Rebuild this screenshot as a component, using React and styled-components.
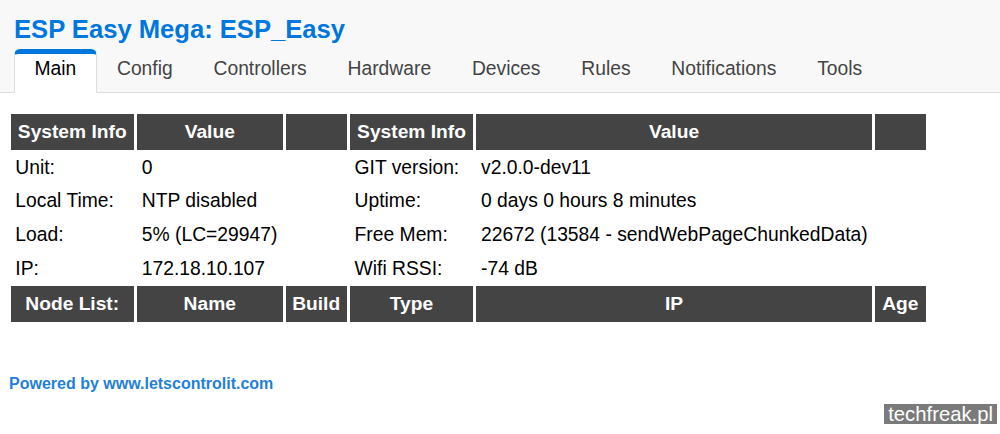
import React from "react";
import styled, { createGlobalStyle } from "styled-components";

const Global = createGlobalStyle`
  * { box-sizing: border-box; }
  html, body { margin: 0; padding: 0; background: #fff; }
  body { font-family: "Liberation Sans", Arial, sans-serif; font-size: 19.2px; color: #000; }
`;

const Page = styled.div`
  position: relative;
  width: 1000px;
  height: 434px;
  overflow: hidden;
`;

const Header = styled.header`
  background: #f8f8f8;
  border-bottom: 1px solid #ddd;
  padding: 15px 14px 0;
`;

const Title = styled.h1`
  margin: 0;
  font-size: 25.6px;
  line-height: 29px;
  font-weight: bold;
  color: #07d;
`;

const TabRow = styled.nav`
  display: flex;
  margin-top: 5px;
  margin-bottom: -1px;
`;

const Tab = styled.a`
  display: block;
  padding: 4px 19.4px 12px;
  line-height: 22px;
  font-size: 19.3px;
  white-space: nowrap;
  text-decoration: none;
  border: solid transparent;
  border-width: 5px 1.2px 1px;
  border-radius: 6px 6px 0 0;
  color: ${(p) => (p.$active ? "#000" : "#444")};
  background: ${(p) => (p.$active ? "#fff" : "transparent")};
  border-color: ${(p) => (p.$active ? "#07d #ddd #fff" : "transparent")};
`;

const Table = styled.table`
  table-layout: fixed;
  width: 921.5px;
  margin: 18.6px 0 0 7.5px;
  border-collapse: separate;
  border-spacing: 3.5px 2.4px;
`;

const Th = styled.th`
  padding: 7px 4px;
  height: 36px;
  line-height: 22px;
  background: #444;
  color: #fff;
  font-weight: bold;
  font-size: 19.2px;
  text-align: center;
  white-space: nowrap;
`;

const Td = styled.td`
  padding: 5.3px 4.8px 4.3px;
  height: 31.6px;
  line-height: 22px;
  font-size: 19.3px;
  color: #000;
  white-space: nowrap;
  text-align: left;
`;

const Footer = styled.footer`
  margin: 51px 0 0 9px;
`;

const Powered = styled.h6`
  margin: 0;
  font-size: 16px;
  line-height: 18px;
  font-weight: bold;
  color: #1f7fd8;
`;

const FooterLink = styled.a`
  color: inherit;
  text-decoration: none;
`;

const Watermark = styled.div`
  position: absolute;
  right: 3px;
  bottom: 10px;
  height: 20px;
  padding: 0 4px 0 4px;
  background: #7a7a7a;
  color: #fff;
  font-size: 20.3px;
  line-height: 20px;
`;

const tabs = ["Main", "Config", "Controllers", "Hardware", "Devices", "Rules", "Notifications", "Tools"];
const widths = [123, 145, 61, 123, 394, 51];

const rows = [
  ["Unit:", "0", "", "GIT version:", "v2.0.0-dev11"],
  ["Local Time:", "NTP disabled", "", "Uptime:", "0 days 0 hours 8 minutes"],
  ["Load:", "5% (LC=29947)", "", "Free Mem:", "22672 (13584 - sendWebPageChunkedData)"],
  ["IP:", "172.18.10.107", "", "Wifi RSSI:", "-74 dB"],
];

export default function App() {
  return (
    <Page>
      <Global />
      <Header>
        <Title>ESP Easy Mega: ESP_Easy</Title>
        <TabRow>
          {tabs.map((t, i) => (
            <Tab key={t} $active={i === 0}>{t}</Tab>
          ))}
        </TabRow>
      </Header>
      <Table>
        <colgroup>
          {widths.map((w, i) => (
            <col key={i} style={{ width: w }} />
          ))}
        </colgroup>
        <tbody>
          <tr>
            <Th>System Info</Th>
            <Th>Value</Th>
            <Th></Th>
            <Th>System Info</Th>
            <Th>Value</Th>
            <Th></Th>
          </tr>
          {rows.map((r, i) => (
            <tr key={i}>
              {r.map((c, j) => (
                <Td key={j}>{c}</Td>
              ))}
              <Td></Td>
            </tr>
          ))}
          <tr>
            <Th>Node List:</Th>
            <Th>Name</Th>
            <Th>Build</Th>
            <Th>Type</Th>
            <Th>IP</Th>
            <Th>Age</Th>
          </tr>
        </tbody>
      </Table>
      <Footer>
        <Powered>
          Powered by <FooterLink href="#">www.letscontrolit.com</FooterLink>
        </Powered>
      </Footer>
      <Watermark>techfreak.pl</Watermark>
    </Page>
  );
}
